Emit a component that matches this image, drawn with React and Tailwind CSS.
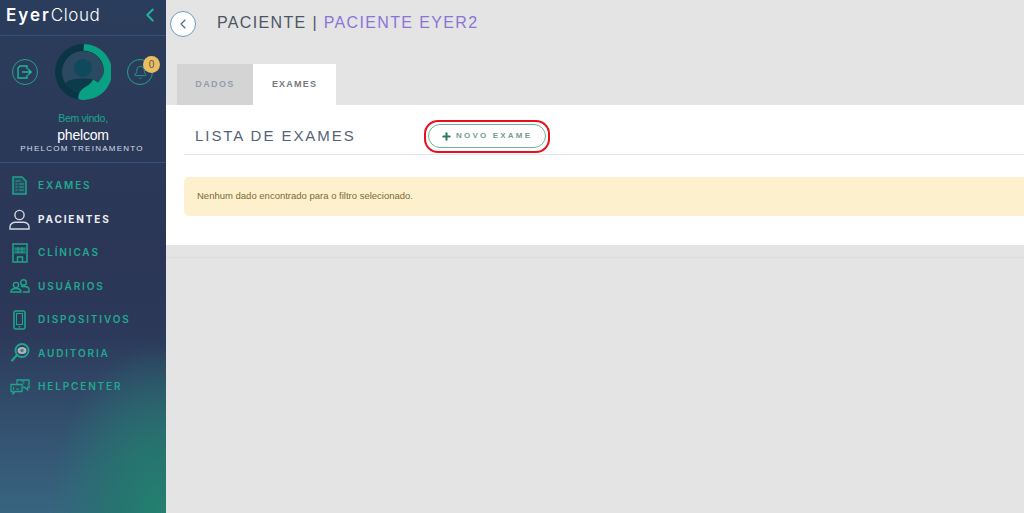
import { ChevronLeft, Bell, Plus } from "lucide-react";

const teal = "#1fa58a";

const ExitIcon = () => (
  <svg width="16" height="14" viewBox="0 0 16 14" fill="none" stroke="#22b795" strokeWidth="1.4">
    <path d="M10 4V1H3L1 3v10h9v-3" />
    <path d="M5 7h9M11 4l3.200 3L11 10" />
  </svg>
);
const ExamIcon = () => (
  <svg width="15" height="19" viewBox="0 0 15 19" fill="none" stroke={teal} strokeWidth="1.5">
    <path d="M1 1h9l4 4v13H1z" fill="#1fa58a33" />
    <path d="M3.500 5h5M3.500 8h2M7 8h5M3.500 11h2M7 11h5M3.500 14h2M7 14h5" strokeWidth="1.200" />
  </svg>
);
const UserIcon = () => (
  <svg width="21" height="21" viewBox="0 0 21 21" fill="none" stroke="#d5d8e0" strokeWidth="1.400">
    <circle cx="10.500" cy="6" r="4.600" />
    <path d="M1 20v-2.200c0-3 3-4.600 5.500-4.600h8c2.500 0 5.500 1.600 5.500 4.600V20z" />
  </svg>
);
const ClinicIcon = () => (
  <svg width="16" height="20" viewBox="0 0 16 20" fill="none" stroke={teal} strokeWidth="1.500">
    <rect x="1" y="1" width="14" height="18" />
    <path d="M2 4h12v7H2z" fill="#1fa58a66" strokeWidth="0" />
    <path d="M3 6h10M3 9h10M6 4v6M10 4v6" strokeWidth="1" />
    <path d="M5.500 19v-5h5v5" />
  </svg>
);
const UsersIcon = () => (
  <svg width="20" height="14" viewBox="0 0 20 14" fill="none" stroke={teal} strokeWidth="1.400">
    <circle cx="6" cy="6" r="2.600" />
    <circle cx="13.500" cy="3.500" r="2.800" />
    <path d="M1 13c0-2.500 2-3.500 5-3.500s5 1 5 3.500zM11 7.500h3c3 0 5 1 5 3.500v2h-6" />
  </svg>
);
const PhoneIcon = () => (
  <svg width="13" height="20" viewBox="0 0 13 20" fill="none" stroke={teal} strokeWidth="1.600">
    <rect x="1" y="1" width="11" height="18" rx="2" />
    <path d="M3.500 3.500h6v11h-6z" strokeWidth="1.100" />
    <path d="M6.500 16v1.500" />
  </svg>
);
const AuditIcon = () => (
  <svg width="20" height="20" viewBox="0 0 20 20" fill="none">
    <circle cx="12" cy="7.500" r="6.500" stroke={teal} strokeWidth="2" />
    <ellipse cx="12" cy="7.500" rx="4.500" ry="3.500" fill="#a9b8bc" />
    <circle cx="12" cy="7.500" r="1.700" fill="#5c7480" />
    <path d="M7 12l-5 5.500" stroke={teal} strokeWidth="2.200" strokeLinecap="round" />
  </svg>
);
const HelpIcon = () => (
  <svg width="20" height="16" viewBox="0 0 20 16" fill="none" stroke={teal} strokeWidth="1.300">
    <path d="M7 5V1h12v7.500h-1.500V11L15 8.500h-2" />
    <path d="M1 5.500h11v7H5L3 15v-2.500H1z" />
    <path d="M3.500 8v3M6 10h3" strokeWidth="1" />
    <path d="M11.500 3.200c.4-1 2.600-1 2.700.2.100 1-1.200 1-1.200 2M13 6.500v.8" strokeWidth="1" />
  </svg>
);

const items = [
  { label: "EXAMES", icon: <ExamIcon /> },
  { label: "PACIENTES", icon: <UserIcon />, active: true },
  { label: "CLÍNICAS", icon: <ClinicIcon /> },
  { label: "USUÁRIOS", icon: <UsersIcon /> },
  { label: "DISPOSITIVOS", icon: <PhoneIcon /> },
  { label: "AUDITORIA", icon: <AuditIcon /> },
  { label: "HELPCENTER", icon: <HelpIcon /> },
];

const Avatar = () => (
  <svg width="56" height="56" viewBox="0 0 56 56">
    <defs>
      <clipPath id="inner">
        <circle cx="28" cy="28" r="21" />
      </clipPath>
    </defs>
    <circle cx="28" cy="28" r="28" fill="#0b3444" />
    <circle cx="28" cy="28" r="21" fill="#2b4a62" />
    <circle cx="28" cy="24" r="9" fill="#0f4a5c" />
    <path d="M10 40c2-4 8-5.500 18-5.500s12 1 15 4l-6 17H12z" fill="#0c3b4b" clipPath="url(#inner)" />
    <path d="M29 0a28 28 0 0 1 0 56c-2.500 0-5-.5-5.500-1-.8-3 .500-7 4-10 3-2.500 8-4 10.500-9.500 2 1 3.500 2 5 3C46 35 49 31 49 27c0-11-9-20-20.500-20.500z" fill="#0aa083" />
  </svg>
);

export default function App() {
  return (
    <div className="flex h-[513px] w-[1024px] overflow-hidden bg-[#e4e4e4] font-['Liberation_Sans',Arial,sans-serif]">
      {/* menu lateral */}
      <aside className="flex h-full w-[166px] shrink-0 flex-col bg-[radial-gradient(ellipse_110px_170px_at_160px_513px,#23806f_0%,#26756f_35%,rgba(38,110,108,0)_100%),linear-gradient(180deg,rgba(54,95,122,0)_65%,#386480_100%),linear-gradient(180deg,#2b3d5c_0%,#2b3656_50%,#2f4062_100%)]">
        <div className="flex h-[36px] shrink-0 items-center justify-between border-b border-[#34507f] pb-[5px] pl-[6px] pr-[5px]">
          <span className="font-['Inter',sans-serif] text-[17px] leading-none text-white">
            <span className="font-semibold tracking-[2px]">Eyer</span>
            <span className="font-light tracking-[0.600px]">Cloud</span>
          </span>
          <ChevronLeft size={22} color="#22b795" strokeWidth={2} />
        </div>
        <div className="flex h-[127px] shrink-0 flex-col items-center border-b border-[#34507f]">
          <div className="mt-[8px] flex h-[56px] w-full items-center justify-between pl-[12px] pr-[13px]">
            <div className="flex h-[26px] w-[26px] items-center justify-center rounded-full border border-[#1fa58a]">
              <ExitIcon />
            </div>
            <Avatar />
            <div className="relative flex h-[26px] w-[26px] items-center justify-center rounded-full border border-[#1fa58a]">
              <Bell size={15} color={teal} strokeWidth={1.400} />
              <span className="absolute -right-[8px] -top-[4px] flex h-[17px] w-[17px] items-center justify-center rounded-full bg-[#e9bd62] text-[10px] text-[#5a5a4a]">
                0
              </span>
            </div>
          </div>
          <p className="mt-[11px] text-[10.500px] leading-[14px] tracking-[-0.300px] text-[#1fa58a]">Bem vindo,</p>
          <p className="mt-[2px] text-[14px] leading-[16px] tracking-[-0.200px] text-white">phelcom</p>
          <p className="mt-[0px] pr-[2px] text-[8px] leading-[12px] tracking-[1.250px] text-[#d8dce6]">PHELCOM TREINAMENTO</p>
        </div>
        <nav className="flex flex-col pt-[6px]">
          {items.map((item) => (
            <div key={item.label} className="flex h-[33.500px] items-center">
              <div className="flex w-[38px] shrink-0 justify-center pl-[1px]">{item.icon}</div>
              <span
                className={`font-['Inter',sans-serif] text-[10px] tracking-[1.850px] ${
                  item.active ? "font-bold text-[#eceef4]" : "font-semibold text-[#22a98e]"
                }`}
              >
                {item.label}
              </span>
            </div>
          ))}
        </nav>
      </aside>

      {/* conteudo */}
      <main className="flex min-w-0 flex-1 flex-col">
        <header className="flex h-[64px] shrink-0 items-start pl-[4px] pt-[11px]">
          <div className="flex h-[26px] w-[26px] items-center justify-center rounded-full border border-[#6f9cc4] bg-white">
            <ChevronLeft size={16} color="#4a6a8a" strokeWidth={1.600} />
          </div>
          <h1 className="ml-[21px] mt-[3px] text-[16px] leading-[18px] tracking-[1.350px] text-[#4b5563]">
            PACIENTE | <span className="text-[#8b74d8]">PACIENTE EYER2</span>
          </h1>
        </header>
        <div className="flex h-[41px] shrink-0 pl-[11px]">
          <div className="flex w-[76px] items-center justify-center bg-[#d4d4d4] text-[9px] font-bold tracking-[1.400px] text-[#949cae]">
            DADOS
          </div>
          <div className="flex w-[83px] items-center justify-center bg-white text-[9px] font-bold tracking-[1.200px] text-[#77777f]">
            EXAMES
          </div>
        </div>
        <section className="h-[140px] shrink-0 bg-white pl-[18px]">
          <div className="flex h-[50px] items-end border-b border-[#e3e5e8] pb-[1.500px]">
            <h2 className="flex h-[33px] w-[240px] items-center pl-[11px] text-[15px] tracking-[1.950px] text-[#56627a]">
              LISTA DE EXAMES
            </h2>
            <div className="rounded-[14px] border-2 border-[#e8101c] px-[2px] py-[2.500px]">
              <button className="flex h-[24px] w-[118px] items-center gap-[4.500px] rounded-full border border-[#6fb296] bg-white pl-[11.500px]">
                <Plus size={11} color="#2f7d5c" strokeWidth={4.500} />
                <span className="text-[8px] font-bold tracking-[2.200px] text-[#6f9f8c]">NOVO EXAME</span>
              </button>
            </div>
          </div>
          <div className="mt-[22px] flex h-[39px] items-center rounded-l-[5px] bg-[#fdf1cd] pl-[13px] text-[9.500px] text-[#7b6a35]">
            Nenhum dado encontrado para o filtro selecionado.
          </div>
        </section>
        <div className="mt-[12px] h-px bg-[#dcdcdc]" />
      </main>
    </div>
  );
}
